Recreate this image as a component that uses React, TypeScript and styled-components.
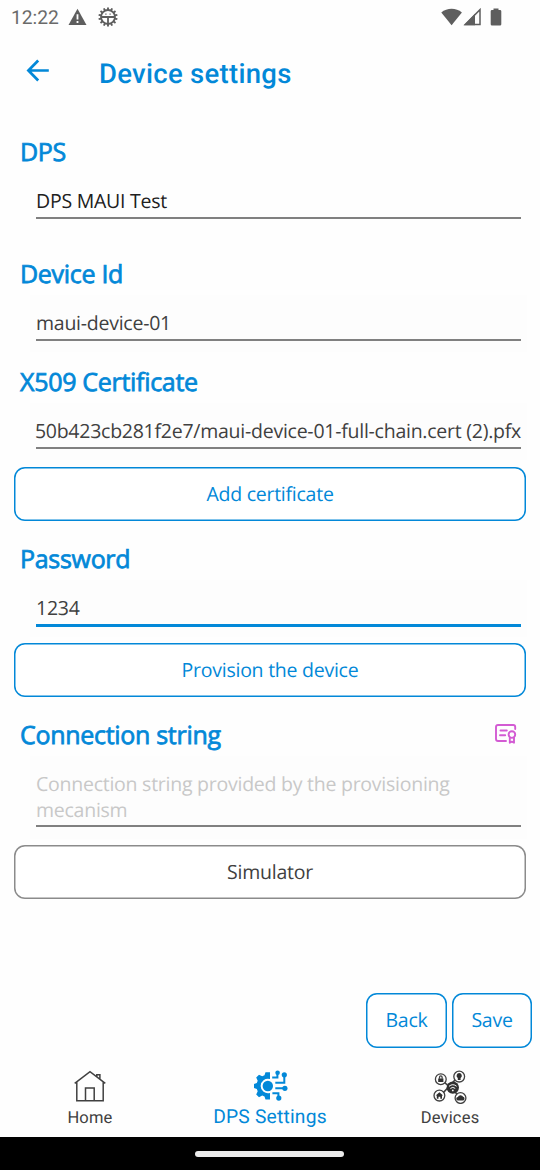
import React from "react";
import styled, { createGlobalStyle } from "styled-components";

const BLUE = "#0288d8";
const INK = "#404040";

const GlobalStyle = createGlobalStyle`
  *, *::before, *::after { box-sizing: border-box; }
  body { margin: 0; background: #fefefe; text-rendering: geometricPrecision; }
  button { text-rendering: inherit; }
`;

const Screen = styled.div`
  display: flex;
  flex-direction: column;
  width: 540px;
  height: 1170px;
  overflow: hidden;
  background: #fefefe;
  font-family: "Open Sans", sans-serif;
`;

const StatusBar = styled.header`
  display: flex;
  align-items: center;
  height: 34px;
  padding: 0 38px 0 11px;
  color: #6a6a6a;
`;

const Clock = styled.span`
  width: 57px;
  padding-top: 1px;
  font: 400 19.24px/34px Roboto, sans-serif;
  white-space: nowrap;
`;

const StatusIcons = styled.div<{ $gap: number; $end?: boolean }>`
  display: flex;
  align-items: center;
  gap: ${(p) => p.$gap}px;
  margin-left: ${(p) => (p.$end ? "auto" : "0")};
  svg { display: block; }
`;

const AppBar = styled.div`
  display: flex;
  align-items: center;
  height: 78px;
  padding-left: 25px;
`;

const BackButton = styled.button`
  display: flex;
  width: 74px;
  padding: 0 0 6px;
  border: 0;
  background: none;
`;

const Title = styled.h1`
  margin: 0;
  padding-top: 1px;
  color: ${BLUE};
  font: 500 27.48px/36px Roboto, sans-serif;
  letter-spacing: 0.3px;
`;

const Form = styled.main`
  display: flex;
  flex-direction: column;
  flex: 1;
  padding: 22px 13px 0 14px;
`;

const HeadingRow = styled.div<{ $before?: number }>`
  display: flex;
  justify-content: space-between;
  align-items: center;
  height: 34px;
  margin-top: ${(p) => p.$before ?? 0}px;
  padding: 0 10px 0 6px;
`;

const Heading = styled.h2`
  margin: 0;
  padding-top: 1px;
  color: ${BLUE};
  font-size: 25px;
  font-weight: 400;
  line-height: 34px;
  letter-spacing: -0.3px;
  -webkit-text-stroke: 0.75px ${BLUE};
`;

const Field = styled.div<{ $tall?: boolean; $plain?: boolean }>`
  height: ${(p) => (p.$tall ? 83 : 57)}px;
  margin: 5px 0 0 16px;
  padding: 14px 6px 0;
  background: ${(p) => (p.$plain ? "transparent" : "#fdfdfd")};
`;

const FieldText = styled.div<{ $tone?: string; $active?: boolean; $end?: boolean }>`
  display: flex;
  justify-content: ${(p) => (p.$end ? "flex-end" : "flex-start")};
  padding-bottom: 2px;
  border-bottom: ${(p) => (p.$active ? `3px solid ${BLUE}` : "2px solid #808080")};
  color: ${(p) => p.$tone ?? INK};
  font-size: 19.5px;
  line-height: 28px;
  letter-spacing: -0.25px;
  white-space: nowrap;
`;

const Placeholder = styled(FieldText)`
  padding: 1px 0 2px;
  line-height: 26px;
  white-space: normal;
`;

const OutlineButton = styled.button<{ $neutral?: boolean; $width?: number; $before?: number }>`
  width: ${(p) => p.$width ?? 512}px;
  height: ${(p) => (p.$width ? 55 : 54)}px;
  margin-top: ${(p) => p.$before ?? 0}px;
  padding: 0 0 ${(p) => (p.$width ? 1 : 0)}px;
  border: 0;
  border-radius: 11px;
  box-shadow: inset 0 0 0 1.5px ${(p) => (p.$neutral ? "#8b8b8b" : BLUE)};
  background: #fff;
  color: ${(p) => (p.$neutral ? INK : BLUE)};
  font: 400 19.5px/28px "Open Sans", sans-serif;
  letter-spacing: -0.25px;
`;

const Actions = styled.div`
  display: flex;
  justify-content: flex-end;
  gap: 5px;
  padding: 0 8px 12px 0;
`;

const TabBar = styled.nav`
  display: grid;
  grid-template-columns: repeat(3, 1fr);
  height: 77px;
`;

const Tab = styled.a<{ $active?: boolean; $gap: number }>`
  display: flex;
  flex-direction: column;
  align-items: center;
  gap: ${(p) => p.$gap}px;
  padding-top: 10px;
  color: ${(p) => (p.$active ? BLUE : INK)};
  font: 400 ${(p) => (p.$active ? 19.24 : 16.49)}px/24px Roboto, sans-serif;
  letter-spacing: 0.2px;
  svg { display: block; }
`;

const GestureBar = styled.footer`
  display: flex;
  justify-content: center;
  align-items: center;
  height: 33px;
  padding-right: 1px;
  background: #000;
`;

const GestureHandle = styled.div`
  width: 149px;
  height: 6px;
  border-radius: 3px;
  background: #ebebeb;
`;

const teeth = (count: number) => Array.from({ length: count }, (_, i) => (i * 360) / count);

const WarningIcon = () => (
  <svg width="20" height="18" viewBox="0 0 20 18">
    <path d="M9.5.8 18.5 17H.5Z" fill="#5e5e5e" />
    <path d="M9.5 6.2v5.2M9.5 13v2" stroke="#fefefe" strokeWidth="1.8" />
  </svg>
);

const DebugIcon = () => (
  <svg width="20" height="20" viewBox="0 0 20 20" fill="none" stroke="#5e5e5e">
    <circle cx="10" cy="10" r="7" strokeWidth="1.8" />
    {teeth(14).map((a) => (
      <path key={a} d="M10 3V.4" strokeWidth="1.9" transform={`rotate(${a} 10 10)`} />
    ))}
    <path d="M3 10h14M10 10v7" strokeWidth="1.8" />
    <path d="M7.3 7.2h1.2M11.5 7.2h1.2" strokeWidth="1.2" />
  </svg>
);

const WifiIcon = () => (
  <svg width="22" height="18" viewBox="0 0 22 18">
    <path d="M11.600 17.300 1.300 4.400C7-.4 16.200-.4 21.900 4.400Z" fill="#5e5e5e" />
  </svg>
);

const SignalIcon = () => (
  <svg width="18" height="18" viewBox="0 0 18 18">
    <path d="M2.200 16.500 17 1.600v14.900Z" fill="none" stroke="#5e5e5e" strokeWidth="1.5" />
    <path d="M1 17.200 12 5.800v11.400Z" fill="#5e5e5e" />
  </svg>
);

const BatteryIcon = () => (
  <svg width="12" height="18" viewBox="0 0 12 18">
    <path d="M3.500 2V.4h5V2H10q1.300 0 1.300 1.300v13q0 1.300-1.300 1.300H2Q.7 17.600.7 16.300v-13Q.7 2 2 2Z" fill="#5e5e5e" />
  </svg>
);

const ArrowIcon = () => (
  <svg width="26" height="24" viewBox="0 0 26 24" fill="none" stroke={BLUE} strokeWidth="2.7">
    <path d="M23.800 12.500H3.400M13.200 2.500 3.400 12.500l9.800 10" />
  </svg>
);

const CertificateIcon = () => (
  <svg width="22" height="20" viewBox="0 0 22 20" fill="none" stroke="#d35bd3" strokeWidth="1.900" strokeLinecap="round" strokeLinejoin="round">
    <path d="M11 17H3q-2 0-2-2V3q0-2 2-2h15.300Q20.200 1 20.200 3V5M5.500 6.500h6.300M5 11.200h5.200" />
    <circle cx="16.900" cy="10.600" r="3.300" />
    <path d="M14.800 13.800v4.900l2.100-1 2.100 1v-4.900" />
  </svg>
);

const HomeIcon = () => (
  <svg width="32" height="32" viewBox="0 0 32 32" fill="none" stroke="#404040" strokeWidth="1.500">
    <path d="M.7 13.400 16 1.600l15.300 11.800M2.800 12v18.800h26.400V12M11.500 30.800V17.900h8.700v12.900M22.800 6.600V4.800h3.100v4.400" />
  </svg>
);

const DpsIcon = () => (
  <svg width="35" height="31" viewBox="0 0 35 31" fill="none" stroke={BLUE}>
    <path
      d="M17 2.200H12.500L11.500 5.300 9.200 6.300 6 4.700 3.200 7.600 4.700 10.700 3.800 13.100 1 14V18L3.800 18.900 4.700 21.300 3.200 24.400 6 27.300 9.200 25.600 11.500 26.600 12.500 29.600H17V23a7.300 7.300 0 1 1 0-14Z"
      fill={BLUE}
      stroke="none"
    />
    <circle cx="14.800" cy="16" r="5.200" fill={BLUE} stroke="none" />
    <path d="M19.200 7.600h5.200V3M22.300 12.800h9V5.500M22.300 18.300h9.600M19.400 23.200h6v5" strokeWidth="2" />
    <g fill={BLUE} stroke="none">
      <circle cx="24.600" cy="2.800" r="2.300" />
      <circle cx="31.300" cy="4.800" r="2.600" />
      <circle cx="31.900" cy="18.300" r="2.600" />
      <circle cx="25.800" cy="28.100" r="2.600" />
    </g>
  </svg>
);

const DevicesIcon = () => (
  <svg width="34" height="34" viewBox="0 0 34 34" fill="none" stroke="#404040" strokeWidth="1.300">
    <path d="m10 11 14 13M22 10 10 23" strokeWidth="1.700" />
    <g fill="#fefefe">
      <circle cx="7.800" cy="9.200" r="5.400" />
      <circle cx="26.200" cy="6.600" r="5.400" />
      <circle cx="6.400" cy="25.600" r="5.400" />
      <circle cx="27.500" cy="28" r="5.400" />
    </g>
    <circle cx="19.800" cy="17.600" r="6.200" fill="#303030" stroke="none" />
    <path d="M16 16.300q3.800-3.200 7.600 0M17.400 18.400q2.400-2 4.800 0" stroke="#fefefe" strokeWidth="1" />
    <circle cx="19.800" cy="20.400" r=".9" fill="#fefefe" stroke="none" />
    <path d="M6.500 8.700V7.300q0-1.400 1.300-1.400t1.300 1.400v1.400" />
    <g fill="#303030" stroke="none">
      <path d="M5.200 8.400h5.200V12H5.200ZM26.200 3.100a2.600 2.600 0 0 1 1.400 4.800v2h-2.800v-2a2.600 2.600 0 0 1 1.400-4.800ZM6.400 22.200l3.700 3.400H9v3.100H7.300v-2H5.500v2H3.800v-3.100H2.700ZM25 30.400a1.700 1.700 0 0 1-.1-3.400 2.800 2.800 0 0 1 5.200-.2 1.900 1.900 0 0 1 .2 3.600Z" />
    </g>
  </svg>
);

export default function App() {
  return (
    <Screen>
      <GlobalStyle />
      <StatusBar>
        <Clock>12:22</Clock>
        <StatusIcons $gap={10}>
          <WarningIcon />
          <DebugIcon />
        </StatusIcons>
        <StatusIcons $gap={9} $end>
          <StatusIcons $gap={1}>
            <WifiIcon />
            <SignalIcon />
          </StatusIcons>
          <BatteryIcon />
        </StatusIcons>
      </StatusBar>
      <AppBar>
        <BackButton aria-label="Go back">
          <ArrowIcon />
        </BackButton>
        <Title>Device settings</Title>
      </AppBar>
      <Form>
        <HeadingRow>
          <Heading>DPS</Heading>
        </HeadingRow>
        <Field $plain>
          <FieldText $tone="#202020">DPS MAUI Test</FieldText>
        </Field>
        <HeadingRow $before={26}>
          <Heading>Device Id</Heading>
        </HeadingRow>
        <Field>
          <FieldText>maui-device-01</FieldText>
        </Field>
        <HeadingRow $before={12}>
          <Heading>X509 Certificate</Heading>
        </HeadingRow>
        <Field>
          <FieldText $end>50b423cb281f2e7/maui-device-01-full-chain.cert (2).pfx</FieldText>
        </Field>
        <OutlineButton $before={7}>Add certificate</OutlineButton>
        <HeadingRow $before={20}>
          <Heading>Password</Heading>
        </HeadingRow>
        <Field>
          <FieldText $active>1234</FieldText>
        </Field>
        <OutlineButton $before={6}>Provision the device</OutlineButton>
        <HeadingRow $before={20}>
          <Heading>Connection string</Heading>
          <CertificateIcon />
        </HeadingRow>
        <Field $tall>
          <Placeholder $tone="#c8c8c8">Connection string provided by the provisioning mecanism</Placeholder>
        </Field>
        <OutlineButton $before={6} $neutral>
          Simulator
        </OutlineButton>
      </Form>
      <Actions>
        <OutlineButton $width={81}>Back</OutlineButton>
        <OutlineButton $width={80}>Save</OutlineButton>
      </Actions>
      <TabBar>
        <Tab $gap={5}>
          <HomeIcon />
          Home
        </Tab>
        <Tab $active $gap={4}>
          <DpsIcon />
          DPS Settings
        </Tab>
        <Tab $gap={3}>
          <DevicesIcon />
          Devices
        </Tab>
      </TabBar>
      <GestureBar>
        <GestureHandle />
      </GestureBar>
    </Screen>
  );
}
